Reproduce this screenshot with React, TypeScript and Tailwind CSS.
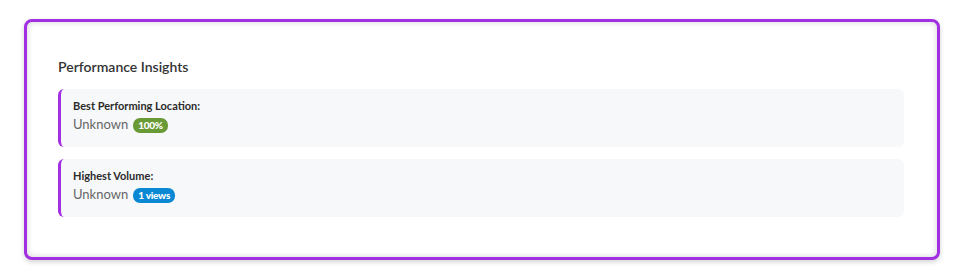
const insights = [
  { label: 'Best Performing Location:', value: 'Unknown', badge: '100%', badgeClass: 'bg-[#6a9a36]' },
  { label: 'Highest Volume:', value: 'Unknown', badge: '1 views', badgeClass: 'bg-[#0b88d4]' },
]

function InsightRow({ label, value, badge, badgeClass }: (typeof insights)[number]) {
  return (
    <div className="h-[58px] rounded-md border-l-[3px] border-[#a32fe2] bg-[#f7f8fa] pl-[12px] pt-[9px]">
      <p className="text-[11px] leading-[16px] font-bold text-[#2b2b2b]">{label}</p>
      <div className="mt-[2px] flex items-center gap-[5px] h-[18px]">
        <span className="text-[13px] text-[#666]">{value}</span>
        <span
          className={`${badgeClass} h-[15px] rounded-[7px] px-[5px] text-[10px] leading-[15px] font-black text-white tracking-tight`}
        >
          {badge}
        </span>
      </div>
    </div>
  )
}

export default function App() {
  return (
    <div className="min-h-[273px] bg-white pl-6 pt-[19px]" style={{ fontFamily: 'Lato, "Open Sans", sans-serif' }}>
      <div className="h-[241px] w-[916px] rounded-lg border-[3px] border-[#a32fe2] bg-white pl-[31px] pr-[33px] pt-[35px] shadow-[0_2px_5px_rgba(0,0,0,0.18),inset_0_0_6px_rgba(0,0,0,0.18)]">
        <h2 className="text-[14px] leading-[20px] font-semibold text-[#333]">Performance Insights</h2>
        <div className="mt-3 flex flex-col gap-3">
          {insights.map((item) => (
            <InsightRow key={item.label} {...item} />
          ))}
        </div>
      </div>
    </div>
  )
}
